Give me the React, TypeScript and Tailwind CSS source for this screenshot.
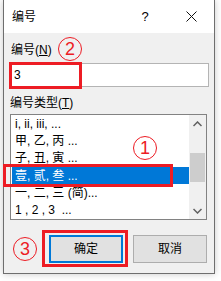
import React from 'react';

const font = { fontFamily: '"Liberation Sans", "Noto Sans CJK SC", sans-serif' };

const items = ['i, ii, iii, ...', '甲, 乙, 丙 ...', '子, 丑, 寅 ...', '壹, 贰, 叁 ...', '一, 二, 三 (简)...', '1 , 2 , 3  ...'];

const Circle = ({ n, className }: { n: string; className: string }) => (
  <div
    className={`absolute w-[24px] h-[24px] rounded-full border-[1.5px] border-[#ed1c24] text-[#ed1c24] flex items-center justify-center text-[18px] leading-none ${className}`}
    style={{ fontFamily: '"Liberation Sans", sans-serif' }}
  >
    {n}
  </div>
);

const App = () => {
  return (
    <div className="w-[221px] h-[281px] bg-white pl-[3px] overflow-hidden" style={font}>
      <div className="w-[212px] h-[274px] border-x border-b border-[#6e6e6e] flex flex-col shadow-[0_0_7px_rgba(0,0,0,0.22)] text-[12px] text-black">
        {/* title bar */}
        <div className="h-[33px] bg-white flex items-center">
          <span className="pl-[8px] text-[12px] flex-1">编号</span>
          <div className="w-[46px] h-full flex items-center justify-center text-[13px]">?</div>
          <div className="w-[46px] h-full flex items-center justify-center">
            <svg width="11" height="11" viewBox="0 0 11 11">
              <path d="M0.5 0.5 L10.5 10.5 M10.5 0.5 L0.5 10.5" stroke="#111" strokeWidth="1" />
            </svg>
          </div>
        </div>

        {/* body */}
        <div className="relative flex-1 bg-[#f0f0f0] px-[5px] flex flex-col">
          <div className="mt-[10px] ml-[2px] h-[14px] leading-[14px]">
            编号(<span className="underline">N</span>)
          </div>
          <div className="mt-[6px] h-[24px] bg-white border border-[#b4b4b4] flex items-center pl-[4px] text-[12px]">3</div>
          <div className="mt-[9px] ml-[1px] h-[14px] leading-[14px]">
            编号类型(<span className="underline">T</span>)
          </div>
          <div className="mt-[4px] ml-[1px] w-[197px] h-[106px] bg-white border border-[#828282] flex">
            <div className="flex-1 pl-[1px] flex flex-col">
              {items.map((t, i) => (
                <div
                  key={t}
                  className={`h-[17.33px] flex items-center pl-[3px] whitespace-pre ${i === 3 ? 'bg-[#0078d7] text-white' : ''}`}
                >
                  {t}
                </div>
              ))}
            </div>
            <div className="w-[17px] bg-[#f0f0f0] flex flex-col items-center">
              <div className="h-[17px] flex items-center justify-center">
                <svg width="9" height="6" viewBox="0 0 9 6">
                  <path d="M0.5 5 L4.5 1 L8.5 5" stroke="#606060" strokeWidth="1.5" fill="none" />
                </svg>
              </div>
              <div className="mt-[21px] w-[15px] h-[29px] bg-[#cdcdcd]" />
              <div className="flex-1" />
              <div className="h-[17px] flex items-center justify-center">
                <svg width="9" height="6" viewBox="0 0 9 6">
                  <path d="M0.5 1 L4.5 5 L8.5 1" stroke="#606060" strokeWidth="1.5" fill="none" />
                </svg>
              </div>
            </div>
          </div>
          <div className="mt-[15px] h-[28px] flex gap-[10px] pl-[40px]">
            <button className="w-[74px] h-full bg-[#e1e1e1] border-2 border-[#0078d7] text-[12px]">确定</button>
            <button className="w-[74px] h-full bg-[#e1e1e1] border border-[#adadad] text-[12px]">取消</button>
          </div>

          {/* annotations */}
          <div className="absolute left-[5px] top-[29px] w-[73px] h-[27px] border-[3px] border-[#ed1c24]" />
          <div className="absolute left-[-1px] top-[131px] w-[170px] h-[23px] border-[3px] border-[#ed1c24]" />
          <div className="absolute left-[38px] top-[197px] w-[86px] h-[37px] border-[3px] border-[#ed1c24]" />
          <Circle n="2" className="left-[54px] top-[4px]" />
          <Circle n="1" className="left-[129px] top-[103px]" />
          <Circle n="3" className="left-[9px] top-[204px]" />
        </div>
      </div>
    </div>
  );
};

export default App;
